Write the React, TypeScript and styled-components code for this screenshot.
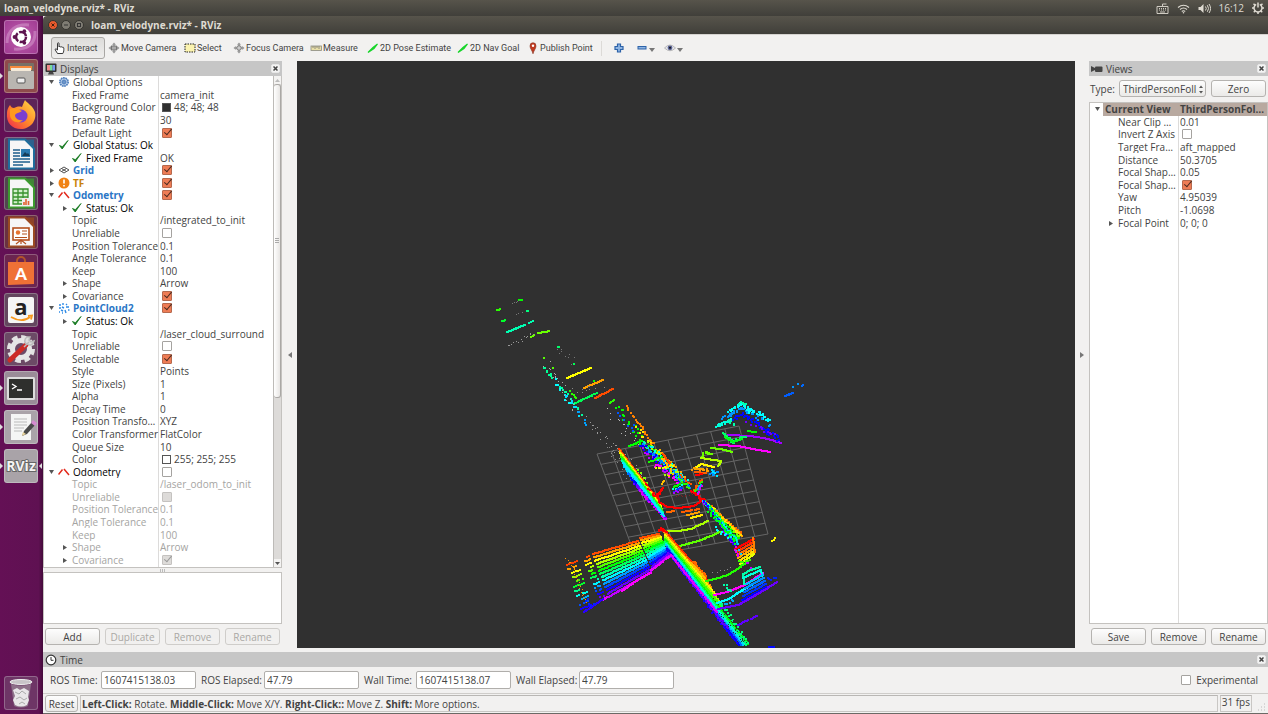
import React from 'react';
import styled, { createGlobalStyle, css } from 'styled-components';

const GlobalStyle = createGlobalStyle`
  *, *::before, *::after { box-sizing: border-box; }
  html, body, #root { height: 100%; }
  body { margin: 0; background: #f2f1f0; color: #434343; font: 10px/12px "Open Sans", "Noto Sans", sans-serif; overflow: hidden; }
  button, input, select { font: inherit; color: inherit; margin: 0; }
`;

/* ---------- desktop shell ---------- */

const Desktop = styled.div`
  display: flex;
  flex-direction: column;
  height: 100%;
`;

const barFill = css`
  background: linear-gradient(#57544b, #403f3a);
  color: #dfdbd2;
`;

const TopPanel = styled.header`
  ${barFill}
  display: flex;
  align-items: center;
  justify-content: space-between;
  flex: 0 0 16px;
  padding: 0 4px;
`;

const PanelTitle = styled.span`
  font-weight: 700;
`;

const Indicators = styled.div`
  display: flex;
  align-items: center;
  gap: 8px;
`;

const Body = styled.div`
  display: flex;
  flex: 1;
  min-height: 0;
`;

const Launcher = styled.nav`
  display: flex;
  flex-direction: column;
  flex: 0 0 43px;
  gap: 5px;
  padding: 4px 0 4px 4px;
  background: linear-gradient(90deg, #641055, #5f1152 90%, #430a3a);
`;

const LaunchButton = styled.button<{ $tone: string; $last?: boolean }>`
  position: relative;
  width: 34px;
  height: 34px;
  padding: 0;
  border: 1px solid rgba(255, 255, 255, 0.25);
  border-radius: 3px;
  background: ${(p) => p.$tone};
  ${(p) => p.$last && 'margin-top: auto;'}
  svg { display: block; width: 32px; height: 32px; overflow: visible; }
`;

const Pip = styled.i<{ $right?: boolean }>`
  position: absolute;
  top: 13px;
  ${(p) => (p.$right ? 'right: -5px; border-right: 3px solid #ddd;' : 'left: -5px; border-left: 3px solid #ddd;')}
  border-top: 3px solid transparent;
  border-bottom: 3px solid transparent;
`;

const Window = styled.main`
  display: flex;
  flex-direction: column;
  flex: 1;
  min-width: 0;
  border-bottom: 1px solid #6b6965;
`;

const TitleBar = styled.div`
  ${barFill}
  display: flex;
  align-items: center;
  gap: 3px;
  flex: 0 0 18px;
  padding: 0 5px;
  border-radius: 4px 0 0 0;
  font-weight: 700;
  h1 { margin: 0 0 0 4px; font: inherit; }
`;

const WindowDot = styled.button<{ $close?: boolean }>`
  display: flex;
  width: 10px;
  height: 10px;
  padding: 0;
  border: 1px solid #35342f;
  border-radius: 50%;
  background: ${(p) => (p.$close ? '#ea5a2d' : '#7f7c73')};
  svg { width: 8px; height: 8px; }
`;

/* ---------- toolbar ---------- */

const Toolbar = styled.div`
  display: flex;
  align-items: center;
  flex: 0 0 27px;
  padding-left: 8px;
  font-family: Roboto, "Open Sans", sans-serif;
  font-size: 9px;
  border-top: 1px solid #d5d3d0;
`;

const ToolButton = styled.button<{ $w: number; $active?: boolean }>`
  display: flex;
  align-items: center;
  gap: 1px;
  width: ${(p) => p.$w}px;
  height: 22px;
  padding: 0 0 0 2px;
  white-space: nowrap;
  border: 1px solid ${(p) => (p.$active ? '#a9a7a4' : 'transparent')};
  border-radius: 3px;
  background: ${(p) => (p.$active ? 'linear-gradient(#dddcda, #efeeed)' : 'transparent')};
  svg { flex: none; width: 12px; height: 12px; }
`;

const Separator = styled.i`
  width: 1px;
  height: 15px;
  margin-right: 8px;
  background: #dcdad7;
`;

/* ---------- docks ---------- */

const Workspace = styled.div`
  display: grid;
  grid-template-columns: 239px 15px minmax(0, 1fr) 14px 179px;
  flex: 1;
  min-height: 0;
  padding-bottom: 4px;
`;

const Dock = styled.section`
  display: flex;
  flex-direction: column;
  min-width: 0;
  min-height: 0;
`;

const DockHeader = styled.div`
  display: flex;
  align-items: center;
  gap: 3px;
  flex: none;
  height: 15px;
  padding: 0 2px 0 2px;
  background: #c6c6c6;
  svg { width: 12px; height: 12px; }
  h2 { flex: 1; margin: 0; font: inherit; }
`;

const CloseButton = styled.button`
  display: flex;
  width: 9px;
  height: 9px;
  padding: 1px;
  border: 1px solid #e8e8e8;
  border-radius: 2px;
  background: #f4f4f4;
  && svg { width: 5px; height: 5px; }
`;

const Gutter = styled.div`
  display: flex;
  align-items: center;
  justify-content: center;
`;

const Frame = styled.div<{ $grow?: boolean; $flush?: boolean }>`
  display: flex;
  ${(p) => (p.$grow ? 'flex: 1; min-height: 0;' : 'height: 52px;')}
  border: 1px solid #c4c2bf;
  ${(p) => p.$flush && 'border-top: 0;'}
  background: #fff;
  overflow: hidden;
`;

const TreeArea = styled.div<{ $split: number }>`
  flex: 1;
  min-width: 0;
  background: linear-gradient(90deg, transparent ${(p) => p.$split - 1}px, #dcdbda 0, #dcdbda ${(p) => p.$split}px, transparent 0);
`;

const Tree = styled.table<{ $split: number; $h: number }>`
  width: 100%;
  height: ${(p) => p.$h}px;
  table-layout: fixed;
  border-collapse: collapse;
  white-space: nowrap;
  td { padding: 0; overflow: hidden; vertical-align: middle; line-height: 12px; }
  td:first-child { width: ${(p) => p.$split}px; }
`;

const TreeRow = styled.tr<{ $dim?: boolean; $selected?: boolean }>`
  ${(p) => p.$dim && 'color: #a5a4a2;'}
  ${(p) => p.$selected && 'font-weight: 700; background: linear-gradient(90deg, #fff 13px, #b8a9a0 0);'}
`;

const NameCell = styled.div<{ $level: number; $tone?: string; $bold?: boolean }>`
  display: flex;
  align-items: center;
  height: 12px;
  padding-left: ${(p) => p.$level * 13 + 2}px;
  color: ${(p) => p.$tone ?? 'inherit'};
  font-weight: ${(p) => (p.$bold ? 700 : 'inherit')};
`;

const Twist = styled.svg`
  flex: none;
  width: 10px;
  height: 10px;
`;

const RowIcon = styled.span`
  display: flex;
  flex: none;
  width: 17px;
  padding-left: 2px;
  svg { width: 12px; height: 12px; }
`;

const ValueCell = styled.div`
  display: flex;
  align-items: center;
  gap: 3px;
  height: 12px;
  padding-left: 1px;
`;

const Swatch = styled.i<{ $fill: string }>`
  width: 9px;
  height: 9px;
  margin-left: 2px;
  border: 1px solid #555;
  background: ${(p) => p.$fill};
`;

const Check = styled.input.attrs({ type: 'checkbox' })`
  appearance: none;
  position: relative;
  flex: none;
  width: 10px;
  height: 10px;
  margin-left: 2px;
  border: 1px solid #a5a3a0;
  border-radius: 1px;
  background: #fff;
  &:checked { background: #ee7c55; border-color: #b5694e; }
  &:disabled { background: #dddbd9; border-color: #c4c2c0; }
  &:checked::after {
    content: '';
    position: absolute;
    left: 3px;
    top: -2px;
    width: 4px;
    height: 8px;
    border: solid #4a2a20;
    border-width: 0 1px 1px 0;
    transform: rotate(40deg);
  }
  &:checked:disabled::after { border-color: #999; }
`;

const ScrollTrack = styled.div`
  display: flex;
  flex-direction: column;
  flex: 0 0 8px;
  align-items: center;
  border-left: 1px solid #bdbbb8;
  background: #dddbd9;
`;

const ScrollCap = styled.div`
  display: flex;
  align-items: center;
  justify-content: center;
  width: 100%;
  height: 8px;
  background: #f4f3f2;
  svg { width: 5px; height: 5px; }
`;

const ScrollFoot = styled(ScrollCap)`
  margin-top: auto;
`;

const ScrollThumb = styled.div`
  display: flex;
  align-items: center;
  justify-content: center;
  width: 100%;
  flex: 0 1 64%;
  border: 1px solid #aaa8a5;
  border-left: 0;
  border-radius: 3px;
  background: linear-gradient(90deg, #fff, #e8e6e4);
  svg { width: 4px; height: 6px; }
`;

const SplitHandle = styled.div`
  display: flex;
  align-items: center;
  justify-content: center;
  height: 4px;
  svg { width: 6px; height: 3px; }
`;

const ButtonRow = styled.div`
  display: grid;
  grid-auto-flow: column;
  grid-auto-columns: 1fr;
  gap: 5px;
  padding: 4px 2px 3px;
`;

const PushButton = styled.button`
  height: 17px;
  padding: 0 4px;
  border: 1px solid #b5b3b0;
  border-radius: 3px;
  background: linear-gradient(#fdfdfd, #ebeae8);
  line-height: 12px;
  &:disabled { color: #aaa8a5; border-color: #cfcdca; background: #f1f0ef; }
`;

const TypeRow = styled.div`
  display: grid;
  grid-template-columns: 24px 87px 1fr;
  gap: 5px;
  align-items: center;
  padding: 4px 2px 5px 1px;
`;

const SelectBox = styled.div`
  position: relative;
  svg { position: absolute; right: 2px; top: 5px; width: 6px; height: 9px; pointer-events: none; }
`;

const TypeSelect = styled.select`
  appearance: none;
  display: block;
  width: 100%;
  height: 17px;
  padding: 0 8px 0 3px;
  border: 1px solid #b5b3b0;
  border-radius: 3px;
  background: linear-gradient(#fdfdfd, #ebeae8);
`;

const Viewport = styled.div`
  min-width: 0;
  min-height: 0;
  background: #303030;
  svg { display: block; width: 100%; height: 100%; }
`;

/* ---------- time dock and status bar ---------- */

const TimeFields = styled.div`
  display: flex;
  align-items: center;
  height: 26px;
  padding: 0 10px 0 7px;
`;

const FieldLabel = styled.label<{ $w: number }>`
  width: ${(p) => p.$w}px;
  white-space: nowrap;
`;

const Field = styled.input`
  width: 95px;
  height: 18px;
  margin-right: 5px;
  padding: 0 2px;
  border: 1px solid #b0aeab;
  border-radius: 2px;
  background: #fff;
`;

const Experimental = styled.label`
  display: flex;
  align-items: center;
  gap: 5px;
  margin-left: auto;
`;

const StatusBar = styled.footer`
  display: flex;
  align-items: stretch;
  gap: 2px;
  height: 20px;
  padding: 1px 2px;
  border-top: 1px solid #cfcdca;
`;

const ResetButton = styled(PushButton)`
  width: 33px;
  padding: 0;
`;

const StatusText = styled.div<{ $grow?: boolean }>`
  ${(p) => (p.$grow ? 'flex: 1; line-height: 16px;' : 'flex: 0 0 31px; line-height: 12px;')}
  padding: 0 1px;
  border: 1px solid #c9c7c4;
  border-top-color: #b9b7b4;
  white-space: nowrap;
`;

const Grip = styled.svg`
  align-self: flex-end;
  width: 12px;
  height: 12px;
`;

/* ---------- small glyphs ---------- */

const Triangle = ({ open }: { open: boolean }) => (
  <Twist viewBox="0 0 10 10" aria-hidden="true">
    <path d={open ? 'M3 3h5L5.500 7z' : 'M4 3v5l4-2.500z'} fill="#555" />
  </Twist>
);

const CloseGlyph = () => (
  <svg viewBox="0 0 5 5"><path d="M.5.5l4 4M4.500.5l-4 4" stroke="#444" strokeWidth="1.500" /></svg>
);

const SideArrow = ({ right }: { right?: boolean }) => (
  <svg width="5" height="6" viewBox="0 0 5 6"><path d={right ? 'M0 0v6l4-3z' : 'M5 0v6l-4-3z'} fill="#777" /></svg>
);

const rowIcons: Record<string, React.ReactNode> = {
  gear: (
    <svg viewBox="0 0 12 12"><circle cx="6" cy="6" r="4.200" fill="#b7cce8" stroke="#4f7fbd" strokeWidth="1.600" strokeDasharray="1.600 .7" /><circle cx="6" cy="6" r="1.600" fill="#fff" stroke="#4f7fbd" strokeWidth=".9" /><path d="M6 2v8M2 6h8M3.200 3.200l5.600 5.600M8.800 3.200L3.200 8.800" stroke="#4f7fbd" strokeWidth=".6" /></svg>
  ),
  ok: <svg viewBox="0 0 12 12"><path d="M1.500 6.500L4.200 10 10 1.500 4.300 7.700z" fill="#187a22" stroke="#187a22" strokeWidth=".9" /></svg>,
  grid: <svg viewBox="0 0 12 12"><path d="M1 6l5-3 5 3-5 3zM3.500 4.500l5 3M8.500 4.500l-5 3" fill="none" stroke="#555" strokeWidth="1" /></svg>,
  warn: <svg viewBox="0 0 12 12"><circle cx="6" cy="6" r="5.500" fill="#f08214" /><path d="M6 2.500v4M6 8v1.600" stroke="#fff" strokeWidth="1.600" /></svg>,
  odom: <svg viewBox="0 0 12 12"><path d="M.5 8.500L4.500 3.500M6 3l5 6" stroke="#e32a1c" strokeWidth="1.500" /></svg>,
  cloud: <svg viewBox="0 0 12 12"><path d="M1 3h2M5 1v2M8 2l1 1M1 6h2M4 5l2 1M8 5h3M3 8l2 1M7 8l1 3M10 8h1.500M1 10h1M4 11h1" stroke="#2f8be6" strokeWidth="1.400" /></svg>,
};

const BLUE = '#2a76c6';

type Item = {
  name: string;
  level?: number;
  open?: boolean;
  icon?: string;
  tone?: string;
  bold?: boolean;
  value?: string;
  swatch?: string;
  checked?: boolean;
  dim?: boolean;
  selected?: boolean;
};

const displayItems: Item[] = [
  { name: 'Global Options', open: true, icon: 'gear' },
  { name: 'Fixed Frame', level: 1, value: 'camera_init' },
  { name: 'Background Color', level: 1, value: '48; 48; 48', swatch: '#303030' },
  { name: 'Frame Rate', level: 1, value: '30' },
  { name: 'Default Light', level: 1, checked: true },
  { name: 'Global Status: Ok', open: true, icon: 'ok', tone: '#000' },
  { name: 'Fixed Frame', level: 1, icon: 'ok', tone: '#000', value: 'OK' },
  { name: 'Grid', open: false, icon: 'grid', tone: BLUE, bold: true, checked: true },
  { name: 'TF', open: false, icon: 'warn', tone: '#c98208', bold: true, checked: true },
  { name: 'Odometry', open: true, icon: 'odom', tone: BLUE, bold: true, checked: true },
  { name: 'Status: Ok', level: 1, open: false, icon: 'ok', tone: '#000' },
  { name: 'Topic', level: 1, value: '/integrated_to_init' },
  { name: 'Unreliable', level: 1, checked: false },
  { name: 'Position Tolerance', level: 1, value: '0.1' },
  { name: 'Angle Tolerance', level: 1, value: '0.1' },
  { name: 'Keep', level: 1, value: '100' },
  { name: 'Shape', level: 1, open: false, value: 'Arrow' },
  { name: 'Covariance', level: 1, open: false, checked: true },
  { name: 'PointCloud2', open: true, icon: 'cloud', tone: BLUE, bold: true, checked: true },
  { name: 'Status: Ok', level: 1, open: false, icon: 'ok', tone: '#000' },
  { name: 'Topic', level: 1, value: '/laser_cloud_surround' },
  { name: 'Unreliable', level: 1, checked: false },
  { name: 'Selectable', level: 1, checked: true },
  { name: 'Style', level: 1, value: 'Points' },
  { name: 'Size (Pixels)', level: 1, value: '1' },
  { name: 'Alpha', level: 1, value: '1' },
  { name: 'Decay Time', level: 1, value: '0' },
  { name: 'Position Transfo…', level: 1, value: 'XYZ' },
  { name: 'Color Transformer', level: 1, value: 'FlatColor' },
  { name: 'Queue Size', level: 1, value: '10' },
  { name: 'Color', level: 1, value: '255; 255; 255', swatch: '#fff' },
  { name: 'Odometry', open: true, icon: 'odom', tone: '#000', checked: false },
  { name: 'Topic', level: 1, value: '/laser_odom_to_init', dim: true },
  { name: 'Unreliable', level: 1, checked: false, dim: true },
  { name: 'Position Tolerance', level: 1, value: '0.1', dim: true },
  { name: 'Angle Tolerance', level: 1, value: '0.1', dim: true },
  { name: 'Keep', level: 1, value: '100', dim: true },
  { name: 'Shape', level: 1, open: false, value: 'Arrow', dim: true },
  { name: 'Covariance', level: 1, open: false, checked: true, dim: true },
];

const viewItems: Item[] = [
  { name: 'Current View', open: true, value: 'ThirdPersonFol…', selected: true },
  { name: 'Near Clip …', level: 1, value: '0.01' },
  { name: 'Invert Z Axis', level: 1, checked: false },
  { name: 'Target Fra…', level: 1, value: 'aft_mapped' },
  { name: 'Distance', level: 1, value: '50.3705' },
  { name: 'Focal Shap…', level: 1, value: '0.05' },
  { name: 'Focal Shap…', level: 1, checked: true },
  { name: 'Yaw', level: 1, value: '4.95039' },
  { name: 'Pitch', level: 1, value: '-1.0698' },
  { name: 'Focal Point', level: 1, open: false, value: '0; 0; 0' },
];

const Spacer = styled.i<{ $w: number }>`
  flex: 0 0 ${(p) => p.$w}px;
`;

const PropertyTree = ({ items, split, height, label }: { items: Item[]; split: number; height: number; label: string }) => (
  <TreeArea $split={split}>
    <Tree $split={split} $h={height} aria-label={label}>
      <tbody>
        {items.map((item, i) => (
          <TreeRow key={i} $dim={item.dim} $selected={item.selected}>
            <td>
              <NameCell $level={item.level ?? 0} $tone={item.tone} $bold={item.bold}>
                {item.open === undefined ? <Spacer $w={10} /> : <Triangle open={item.open} />}
                {item.icon ? <RowIcon>{rowIcons[item.icon]}</RowIcon> : <Spacer $w={3} />}
                {item.name}
              </NameCell>
            </td>
            <td>
              <ValueCell>
                {item.swatch && <Swatch $fill={item.swatch} />}
                {item.checked !== undefined && (
                  <Check defaultChecked={item.checked} disabled={item.dim} aria-label={item.name} />
                )}
                {item.value}
              </ValueCell>
            </td>
          </TreeRow>
        ))}
      </tbody>
    </Tree>
  </TreeArea>
);

/* ---------- toolbar icons ---------- */

const Arrow2D = () => (
  <svg viewBox="0 0 12 12"><path d="M1 10.500L6 5.500 10.500 2 7 6.500z" fill="#19d52c" stroke="#19d52c" strokeWidth="1.200" /></svg>
);
const CrossIcon = ({ core }: { core?: boolean }) => (
  <svg viewBox="0 0 12 12">
    <path d="M6 .5l2 2.300H4zM6 11.500l2-2.300H4zM.5 6l2.300-2v4zM11.500 6L9.200 4v4z" fill="#999" />
    <path d="M6 2v8M2 6h8" stroke="#888" strokeWidth="1" />
    {core ? <circle cx="6" cy="6" r="2.300" fill="#ccc" stroke="#777" /> : <rect x="3.500" y="4" width="5" height="4" fill="#aaa" stroke="#666" strokeWidth=".8" />}
  </svg>
);

const tools: { label: string; w: number; icon: React.ReactNode }[] = [
  { label: 'Interact', w: 54, icon: <svg viewBox="0 0 12 12"><path d="M3.500 11.500L1 7.500l1-.8 1.500 1.300V1.500c0-1 1.500-1 1.500 0V5c.3-.8 1.500-.6 1.600.1.4-.6 1.500-.4 1.600.3.5-.5 1.600-.2 1.600.7 0 2 .2 3.500-1 5.400z" fill="#fff" stroke="#222" strokeWidth=".9" /></svg> },
  { label: 'Move Camera', w: 76, icon: <CrossIcon /> },
  { label: 'Select', w: 49, icon: <svg viewBox="0 0 12 12"><rect x="1" y="2" width="10" height="8" fill="#fbf3b0" stroke="#222" strokeWidth="1" strokeDasharray="1.500 1" /></svg> },
  { label: 'Focus Camera', w: 77, icon: <CrossIcon core /> },
  { label: 'Measure', w: 57, icon: <svg viewBox="0 0 12 12"><rect x="1" y="4" width="10.500" height="4.500" fill="#e9dfa8" stroke="#8a8a80" strokeWidth=".8" /><path d="M3 4v2M5 4v3M7 4v2M9 4v3" stroke="#777" strokeWidth=".8" /></svg> },
  { label: '2D Pose Estimate', w: 90, icon: <Arrow2D /> },
  { label: '2D Nav Goal', w: 70, icon: <Arrow2D /> },
  { label: 'Publish Point', w: 77, icon: <svg viewBox="0 0 12 12"><path d="M6 11.800C5.500 9 3 6.500 3 4a3 3.300 0 016 0c0 2.500-2.500 5-3 7.800z" fill="#c13a20" stroke="#84301f" strokeWidth=".6" /><circle cx="6" cy="3.800" r="1.200" fill="#fff" /></svg> },
];

const Caret = () => <svg viewBox="0 0 12 12"><path d="M0 6h6L3 10z" fill="#777" /></svg>;

/* ---------- launcher icons ---------- */

const DocIcon = ({ tone, children }: { tone: string; children: React.ReactNode }) => (
  <svg viewBox="0 0 32 32">
    <path d="M4 1.500h16l9 9V30.500H4z" fill="#f6f6f6" stroke={tone} strokeWidth="2" />
    <path d="M20 1.500h9v9z" fill={tone} opacity=".75" />
    {children}
  </svg>
);

const launchers: { name: string; tone: string; left?: boolean; right?: boolean; icon: React.ReactNode }[] = [
  { name: 'Search', tone: 'radial-gradient(#c060b0, #a03b92)', icon: <svg viewBox="0 0 32 32"><path d="M2 22C2 8 12 3 24 4M30 10c1 14-9 19-21 18" stroke="#d8a0d0" strokeWidth="3" fill="none" opacity=".5" /><circle cx="16" cy="16" r="10" fill="#fff" /><circle cx="16" cy="16" r="5" fill="none" stroke="#5e1450" strokeWidth="2.500" strokeDasharray="9 1.500" /><circle cx="9.500" cy="16" r="1.900" fill="#5e1450" /><circle cx="19.300" cy="10.200" r="1.900" fill="#5e1450" /><circle cx="19.300" cy="21.800" r="1.900" fill="#5e1450" /></svg> },
  { name: 'Files', tone: '#8f4a4c', left: true, icon: <svg viewBox="0 0 32 32"><rect x="3" y="3" width="26" height="13" rx="1" fill="#777067" /><rect x="5" y="6" width="22" height="4" fill="#f58a3c" /><path d="M6 8h20v4H6z" fill="#f4ead8" /><rect x="3" y="11" width="26" height="18" rx="1" fill="#b9b6b1" /><rect x="12" y="18" width="8" height="5" rx="1" fill="#eee" stroke="#555" /></svg> },
  { name: 'Firefox', tone: '#5d2458', icon: <svg viewBox="0 0 32 32"><defs><linearGradient id="fox" x1="1" y1="0" x2="0" y2="1"><stop offset="0" stopColor="#ffe14a" /><stop offset=".5" stopColor="#ff8a2a" /><stop offset="1" stopColor="#f0244f" /></linearGradient></defs><path d="M20 1c2 3 8 6 10 12 2 9-5 17-14 17S1 24 2 14c0-3 1-5 3-8 1 2 2 3 4 3 2-1 5-2 8-1 1-3 2-5 3-7z" fill="url(#fox)" /><circle cx="16" cy="17" r="6.500" fill="#7a3fd0" /><path d="M5 10c4-2 8 0 12 2-3 2-6 2-7 4 0 3 3 6 8 5-5 5-13 1-13-5z" fill="#ff9a1f" /></svg> },
  { name: 'Writer', tone: '#5c3e62', icon: <DocIcon tone="#1f6d9c"><path d="M8 12h7M8 15h7M8 18h7M8 21h17M8 24h17M8 27h10" stroke="#1e5f8d" strokeWidth="1.500" /><rect x="16" y="11" width="9" height="8" fill="#2b7bb0" /><path d="M17 18l3-4 2 2 1-1 2 3z" fill="#173d58" /></DocIcon> },
  { name: 'Calc', tone: '#52454f', icon: <DocIcon tone="#3c9a2f"><path d="M8 12h15v15H8zM8 16h15M8 20h15M8 23.500h15M13 12v15M18 12v15" fill="#d3f0cc" stroke="#37912c" strokeWidth="1.300" /><rect x="17" y="21" width="8" height="8" fill="#eee" /><path d="M19 28v-3M21 28v-6M23.500 28v-4" stroke="#e4622e" strokeWidth="1.600" /></DocIcon> },
  { name: 'Impress', tone: '#6a3040', icon: <DocIcon tone="#9a4a22"><rect x="8" y="12" width="16" height="12" fill="#fff" stroke="#b4501f" strokeWidth="1.600" /><circle cx="13" cy="16.500" r="2.200" fill="#e6722e" /><path d="M17 15h5M17 18h5M10 21.500h12M16 24v4M11 28l5-4 5 4" stroke="#b4501f" strokeWidth="1.200" fill="none" /></DocIcon> },
  { name: 'Software', tone: '#6b2550', icon: <svg viewBox="0 0 32 32"><path d="M12 9V6a4 4 0 018 0v3" stroke="#b3532b" strokeWidth="2" fill="none" /><path d="M3 7h26v22l-26 1z" fill="#ef7136" /><text x="16" y="25" textAnchor="middle" fontFamily="Lato" fontWeight="900" fontSize="17" fill="#fff">A</text></svg> },
  { name: 'Amazon', tone: '#64465f', icon: <svg viewBox="0 0 32 32"><rect x="3" y="3" width="26" height="26" rx="2" fill="#f5f5f5" /><text x="16" y="21" textAnchor="middle" fontFamily="Open Sans" fontWeight="700" fontSize="22" fill="#222">a</text><path d="M6 23c7 4 14 4 19 0M23 22l4-.5-1 4" stroke="#f7981d" strokeWidth="1.800" fill="none" /></svg> },
  { name: 'Settings', tone: '#6c4a66', icon: <svg viewBox="0 0 32 32"><circle cx="16" cy="16" r="11.500" fill="none" stroke="#e2e2e2" strokeWidth="5" strokeDasharray="5.500 3.500" /><circle cx="16" cy="16" r="8.500" fill="none" stroke="#e6e6e6" strokeWidth="5" /><path d="M5 27L21 12" stroke="#cc2b26" strokeWidth="5" strokeLinecap="round" /><path d="M19 14l5-5M22 4c-3 2-3 6 0 7 3 2 6 1 7-3l-3 1-2-2 1-3z" stroke="#bbb" strokeWidth="1.500" fill="#ddd" /></svg> },
  { name: 'Terminal', tone: '#9a8c98', left: true, icon: <svg viewBox="0 0 32 32"><rect x="2" y="5" width="28" height="23" rx="1.500" fill="#ddd" /><rect x="4" y="7" width="24" height="19" fill="#2e2f2d" /><path d="M7 12l4 2.500L7 17M12 18h5" stroke="#fff" strokeWidth="1.400" fill="none" /></svg> },
  { name: 'Text Editor', tone: '#aaa3a9', left: true, icon: <svg viewBox="0 0 32 32"><path d="M6 3h20v26H6z" fill="#f5f5f5" /><path d="M9 8h13M9 11h13M9 14h13M9 17h10M9 20h8" stroke="#bbb" /><path d="M17 25l2-5 8-9 3 3-8 9z" fill="#4a4a4a" /><path d="M26 12l2-3 4 3-2 3z" fill="#d58bd0" /><path d="M17 25l1-4 3 2z" fill="#e8d39a" /></svg> },
  { name: 'RViz', tone: '#a9a3a8', left: true, right: true, icon: <svg viewBox="0 0 32 32"><text x="16" y="21" textAnchor="middle" fontFamily="Open Sans" fontWeight="700" fontSize="14" fill="#f4f4f4" stroke="#666" strokeWidth="2" paintOrder="stroke">RViz</text></svg> },
];

/* ---------- laser point cloud ---------- */

type Pt = [number, number];

let seed = 20201208;
const rand = () => {
  seed = (seed * 1664525 + 1013904223) % 4294967296;
  return seed / 4294967296;
};

type Trace = { d: string; color: string; size: number };
const cloud: Trace[] = [];

// Samples a polyline into square points; `jitter` scatters and `keep` thins them.
const trace = (pts: Pt[], color: string, o: { size?: number; step?: number; jitter?: number; keep?: number } = {}) => {
  const { size = 2, step = 2, jitter = 0, keep = 1 } = o;
  const shift = size === 1 ? 0.5 : 0;
  let d = '';
  for (let i = 0; i < pts.length - 1; i++) {
    const [x1, y1] = pts[i];
    const [x2, y2] = pts[i + 1];
    const n = Math.max(1, Math.round(Math.hypot(x2 - x1, y2 - y1) / step));
    for (let k = 0; k <= n; k++) {
      if (rand() > keep) continue;
      const x = Math.round(x1 + ((x2 - x1) * k) / n + (rand() - 0.5) * jitter * 2);
      const y = Math.round(y1 + ((y2 - y1) * k) / n + (rand() - 0.5) * jitter * 2);
      d += `M${x} ${y + shift}h${size}`;
    }
  }
  cloud.push({ d, color, size });
};

const hue = (h: number) => `hsl(${h} 100% 50%)`;
const lerp = (a: number, b: number, t: number) => a + (b - a) * t;

// A rainbow strip between two edge lines, running through the hues from the first to the second.
const band = (a: [Pt, Pt], b: [Pt, Pt], n: number, h0: number, h1: number, o = {}) => {
  for (let i = 0; i < n; i++) {
    const t = i / (n - 1);
    trace(
      [
        [lerp(a[0][0], b[0][0], t), lerp(a[0][1], b[0][1], t)],
        [lerp(a[1][0], b[1][0], t), lerp(a[1][1], b[1][1], t)],
      ],
      hue(lerp(h0, h1, t)),
      o,
    );
  }
};

// far corridor
trace([[518, 300], [521, 300]], hue(120));
trace([[496, 310], [499, 309]], hue(110));
trace([[526, 311], [527, 311]], hue(150));
trace([[501, 321], [504, 320]], hue(130));
trace([[506, 332], [524, 325]], hue(162), { step: 1 });
trace([[528, 323], [532, 321]], hue(162));
trace([[530, 337], [533, 335]], hue(95));
trace([[537, 333], [549, 331]], hue(95), { step: 1, keep: 0.9 });
trace([[509, 345], [533, 333]], '#999', { size: 1, jitter: 2 });
trace([[512, 303], [519, 300]], '#777', { size: 1 });
trace([[514, 314], [526, 311]], '#777', { size: 1, keep: 0.6 });
trace([[558, 347], [574, 364]], '#777', { size: 1, jitter: 4, keep: 0.7 });
trace([[557, 347], [558, 347]], hue(145));
trace([[573, 364], [573, 364]], hue(140));
trace([[543, 358], [543, 358]], hue(100));
trace([[552, 368], [552, 368]], hue(100));
trace([[566, 378], [590, 368]], hue(60), { step: 1 });
trace([[583, 388], [602, 380]], hue(38), { step: 1 });
trace([[574, 403], [596, 393]], hue(140), { step: 1, keep: 0.8 });
trace([[594, 398], [612, 389]], hue(18), { step: 1 });
trace([[544, 366], [553, 380]], hue(155), { jitter: 2, keep: 0.7 });
trace([[553, 380], [570, 403]], hue(180), { jitter: 2, keep: 0.6 });
trace([[560, 387], [582, 415]], hue(158), { jitter: 1, keep: 0.7 });
trace([[565, 394], [580, 416]], hue(188), { jitter: 2, keep: 0.8 });
trace([[576, 412], [585, 425]], hue(202), { jitter: 2, keep: 0.6 });
trace([[546, 362], [575, 408]], '#aaa', { size: 1, jitter: 4, keep: 0.6 });
trace([[569, 391], [575, 398]], hue(110), { keep: 0.6 });
trace([[590, 376], [596, 388]], hue(120), { keep: 0.3 });
trace([[574, 390], [610, 386]], '#888', { size: 1, jitter: 3, keep: 0.5 });
trace([[588, 420], [616, 450], [646, 482]], '#999', { size: 1, jitter: 4, keep: 0.9 });
trace([[606, 440], [632, 480]], '#888', { size: 1, jitter: 5, keep: 0.6 });
trace([[610, 410], [640, 450]], '#bbb', { size: 1, jitter: 7, keep: 0.8 });
trace([[609, 403], [613, 400]], hue(110));

// ground grid
const corner = { tl: [597, 454] as Pt, tr: [739, 426] as Pt, br: [768, 534] as Pt, bl: [636, 558] as Pt };
const gridPath = Array.from({ length: 11 }, (_, i) => {
  const t = i / 10;
  const p = (a: Pt, b: Pt) => `${lerp(a[0], b[0], t)} ${lerp(a[1], b[1], t)}`;
  return `M${p(corner.tl, corner.bl)}L${p(corner.tr, corner.br)}M${p(corner.tl, corner.tr)}L${p(corner.bl, corner.br)}`;
}).join('');

// diagonal wall, upper part
trace([[616, 406], [634, 430], [644, 448]], hue(120), { jitter: 3, keep: 0.7 });
trace([[619, 412], [636, 436]], hue(220), { jitter: 3, keep: 0.4 });
trace([[625, 406], [641, 428], [654, 447]], hue(30), { jitter: 1, keep: 0.7 });
trace([[634, 424], [656, 452]], hue(55), { jitter: 2, keep: 0.8 });
trace([[628, 446], [641, 441]], hue(120), { step: 1 });
band([[646, 440], [684, 478]], [[638, 446], [676, 482]], 7, 40, 285, { jitter: 2, keep: 0.75 });
trace([[650, 447], [686, 482]], hue(175), { jitter: 2 });
trace([[648, 450], [690, 487]], hue(210), { jitter: 1, keep: 0.8 });
trace([[642, 446], [664, 464]], hue(240), { jitter: 3, keep: 0.7 });
trace([[662, 454], [670, 465]], hue(18), { step: 1 });
trace([[661, 458], [672, 474]], hue(45), { jitter: 1 });
trace([[648, 462], [661, 457]], hue(115), { keep: 0.9 });
trace([[653, 465], [662, 467]], hue(300), { jitter: 2 });
trace([[656, 468], [672, 466]], hue(65), { jitter: 1 });
trace([[664, 475], [676, 472]], hue(80), { jitter: 1, keep: 0.8 });
trace([[666, 473], [676, 482]], hue(300), { jitter: 2, keep: 0.8 });
trace([[680, 476], [690, 485]], hue(20), { jitter: 1 });
trace([[678, 479], [688, 487]], hue(110), { jitter: 1 });
trace([[658, 484], [668, 477]], hue(45), { jitter: 2, keep: 0.6 });
trace([[636, 470], [646, 482]], hue(90), { jitter: 3, keep: 0.5 });
band([[672, 486], [681, 484]], [[673, 493], [681, 490]], 4, 120, 280, { jitter: 1 });
trace([[676, 496], [700, 493]], '#802020', { size: 1, jitter: 1 });

// left wall
band([[623, 467], [663, 516]], [[638, 490], [665, 519]], 5, 190, 290, { step: 1, jitter: 1, keep: 0.8 });
band([[618, 449], [659, 503]], [[622, 463], [663, 516]], 8, 12, 185, { step: 1 });
trace([[645, 485], [654, 496]], hue(0), { jitter: 2 });
trace([[652, 496], [658, 493]], hue(0), { jitter: 2 });
trace([[662, 488], [657, 495], [658, 502], [667, 507], [678, 508], [693, 506], [703, 499]], hue(0), { step: 1 });

// junction and lower wall
trace([[691, 491], [700, 499], [706, 503]], hue(0), { jitter: 1, step: 1 });
band([[700, 480], [693, 490]], [[701, 486], [697, 493]], 4, 20, 290, { jitter: 1 });
trace([[699, 497], [716, 520], [732, 543]], hue(280), { jitter: 1, keep: 0.5 });
band([[706, 503], [740, 533]], [[702, 500], [734, 546]], 8, 25, 250, { step: 2, jitter: 1 });
trace([[715, 511], [740, 535]], hue(38), { jitter: 1 });
trace([[720, 517], [741, 536]], hue(52), { jitter: 1, keep: 0.7 });
trace([[708, 510], [734, 542]], hue(125), { jitter: 2, step: 1 });
trace([[714, 527], [737, 546]], hue(180), { jitter: 2, keep: 0.7 });
trace([[666, 512], [673, 511]], hue(25));
trace([[681, 512], [698, 509]], hue(22), { step: 1, keep: 0.8 });
trace([[686, 515], [698, 512]], hue(38), { keep: 0.9 });
trace([[690, 518], [701, 515]], hue(55), { step: 1 });
trace([[667, 531], [677, 531], [690, 529], [707, 521]], hue(80), { step: 1 });
trace([[678, 546], [697, 541], [710, 536], [719, 532]], hue(98), { step: 1 });

// upper right structure
trace([[718, 445], [737, 446], [752, 449], [769, 452]], hue(300), { step: 1 });
trace([[727, 435], [750, 436], [767, 439], [780, 443]], hue(278), { step: 1, keep: 0.9 });
trace([[722, 433], [732, 442], [744, 436]], hue(145), { step: 1, jitter: 1 });
trace([[724, 437], [732, 442], [741, 439]], hue(125), { step: 1 });
trace([[747, 431], [755, 432]], hue(120));
trace([[710, 448], [720, 449], [731, 452]], hue(95), { step: 1 });
trace([[700, 456], [706, 452], [710, 455]], hue(95), { jitter: 1, step: 1 });
trace([[700, 458], [720, 461], [717, 466]], hue(78), { step: 1 });
trace([[695, 467], [700, 464], [713, 467]], hue(58), { step: 1 });
trace([[692, 469], [707, 470]], hue(38), { step: 1, jitter: 1 });
trace([[694, 472], [705, 473]], hue(22), { step: 1 });
trace([[695, 475], [701, 474]], hue(0), { step: 1 });
trace([[709, 475], [716, 471]], hue(205), { jitter: 2, step: 1 });
trace([[711, 470], [715, 475]], hue(185), { jitter: 1 });
trace([[715, 427], [724, 423], [732, 419]], hue(172), { step: 1, jitter: 1 });
trace([[718, 424], [728, 420]], hue(172), { jitter: 1 });
trace([[720, 418], [730, 415]], hue(205), { jitter: 1 });
trace([[728, 411], [740, 404], [752, 412]], hue(178), { jitter: 1, step: 1 });
trace([[730, 414], [741, 408], [748, 413]], hue(205), { jitter: 1, step: 1 });
trace([[738, 403], [745, 404]], hue(160), { jitter: 1 });
trace([[745, 410], [758, 414], [768, 420]], hue(180), { jitter: 2, step: 1 });
trace([[733, 418], [743, 415], [757, 423], [767, 432], [778, 439]], hue(238), { jitter: 2, step: 1 });
trace([[750, 415], [762, 420], [769, 425]], hue(205), { jitter: 2, keep: 0.8 });
trace([[741, 422], [760, 428], [775, 436]], hue(265), { jitter: 2, keep: 0.5 });
trace([[727, 419], [733, 424]], hue(160), { jitter: 2 });
trace([[784, 396], [792, 393]], hue(218), { step: 1 });
trace([[792, 387], [792, 387]], hue(205));
trace([[797, 384], [797, 384]], hue(205));
trace([[801, 386], [802, 385]], hue(215));
trace([[771, 541], [774, 538]], hue(58));

// left fan of ground rings
const RINGS = 14;
for (let i = 0; i < RINGS; i++) {
  const t = i / (RINGS - 1);
  const color = hue(lerp(18, 285, t));
  const lx = lerp(583, 599, t);
  const ly = lerp(558, 601, t);
  const mx = lerp(637, 650, t);
  const my = lerp(541, 572, t);
  trace([[lx, ly], [lx + 5, ly - 2]], color, { keep: 0.8 });
  trace([[lx + 9, ly - 4], [mx, my]], color, { step: 1, keep: 0.97 });
  trace([[mx + 2, my - 3], [lerp(658, 668, t), lerp(534, 556, t)]], color, { step: 1 });
}
trace([[621, 591], [638, 579], [650, 573]], hue(300), { step: 1 });
trace([[649, 571], [668, 557]], hue(296), { step: 1, keep: 0.8 });
trace([[602, 600], [606, 597]], hue(295), { step: 1 });
for (let i = 0; i < 11; i++) {
  const t = i / 10;
  const x = lerp(566, 580, t);
  const y = lerp(564, 608, t);
  trace([[x, y + 1], [x + 10, y - 3]], hue(lerp(15, 245, t)), { keep: 0.75 });
}
trace([[566, 559], [572, 566], [580, 588], [586, 602]], hue(35), { size: 1, keep: 0.8, jitter: 1 });
trace([[583, 612], [592, 606], [602, 599]], hue(250), { step: 1, keep: 0.9 });
trace([[586, 600], [594, 606]], hue(232), { jitter: 2 });

// main diagonal wall
band([[663, 530], [706, 580]], [[664, 539], [722, 608]], 5, 10, 105, { step: 1 });
band([[664, 540], [747, 644]], [[666, 549], [738, 645]], 6, 120, 240, { step: 1 });
trace([[666, 550], [736, 643]], hue(245), { step: 1, jitter: 1 });
trace([[667, 552], [726, 628]], hue(262), { step: 1, jitter: 1, keep: 0.9 });
trace([[669, 554], [716, 612]], hue(292), { step: 1, keep: 0.9 });
trace([[720, 604], [748, 645]], hue(150), { jitter: 2, step: 2 });
trace([[724, 614], [746, 644]], '#303030', { size: 1, jitter: 5, step: 1 });
trace([[692, 561], [705, 576]], hue(25), { jitter: 1, step: 1 });
trace([[690, 563], [704, 578]], hue(45), { step: 1 });
trace([[658, 532], [661, 528], [666, 533]], hue(0), { jitter: 1, step: 1 });

// lower right rings
trace([[705, 581], [714, 579], [727, 575], [738, 568], [747, 561]], hue(112), { step: 1 });
trace([[712, 573], [730, 567]], '#888', { size: 1, step: 4, jitter: 1 });
for (let i = 0; i < 6; i++) {
  trace([[734 + i, 549 + i * 3], [753, 539 + i * 3]], hue(i * 13), { step: 1, keep: 0.95 });
}
trace([[752, 538], [754, 552]], hue(30), { step: 2 });
trace([[734, 540], [738, 555]], hue(190), { jitter: 2, keep: 0.8 });
trace([[734, 548], [737, 556]], hue(290), { jitter: 1 });
trace([[739, 562], [748, 560]], hue(105), { jitter: 1 });
trace([[746, 562], [750, 572]], hue(285), { jitter: 2, keep: 0.6 });
trace([[713, 595], [726, 592], [744, 585], [762, 573]], hue(300), { step: 1, keep: 0.8 });
trace([[716, 603], [728, 599], [738, 592], [760, 579]], hue(180), { step: 1 });
trace([[743, 584], [742, 574], [750, 570], [759, 567]], hue(160), { step: 1 });
trace([[742, 578], [760, 570], [761, 576]], hue(172), { step: 1, keep: 0.9 });
for (let i = 0; i < 5; i++) {
  trace([[745 - i, 584 + i * 4], [762 + i, 575 + i * 3]], hue(195 + i * 11), { step: 1, keep: 0.9 });
}
trace([[765, 579], [773, 578]], hue(232), { jitter: 2 });
trace([[724, 604], [736, 599]], hue(200), { jitter: 1, keep: 0.7 });
trace([[724, 585], [730, 592]], hue(160), { jitter: 1 });
trace([[717, 609], [737, 605], [757, 594], [776, 582]], hue(265), { step: 1, keep: 0.95 });
trace([[737, 625], [745, 621], [756, 616]], hue(262), { step: 1, keep: 0.9 });
trace([[768, 647], [773, 647]], hue(238));

const CloudView = () => (
  <svg viewBox="297 61 778 587" preserveAspectRatio="xMidYMid slice" role="img" aria-label="Point cloud">
    <path d={gridPath} stroke="#666" strokeWidth="1" fill="none" />
    <g shapeRendering="crispEdges">
      {cloud.map((t, i) => (
        <path key={i} d={t.d} stroke={t.color} strokeWidth={t.size} fill="none" />
      ))}
    </g>
  </svg>
);

/* ---------- page ---------- */

const fields = [
  { id: 'ros-time', label: 'ROS Time:', w: 51, value: '1607415138.03' },
  { id: 'ros-elapsed', label: 'ROS Elapsed:', w: 63, value: '47.79' },
  { id: 'wall-time', label: 'Wall Time:', w: 52, value: '1607415138.07' },
  { id: 'wall-elapsed', label: 'Wall Elapsed:', w: 63, value: '47.79' },
];

export default function App() {
  return (
    <Desktop>
      <GlobalStyle />
      <TopPanel>
        <PanelTitle>loam_velodyne.rviz* - RViz</PanelTitle>
        <Indicators>
          <svg width="13" height="11" viewBox="0 0 13 11"><path d="M1 3.500h11v7H1zM6.500 3.500V1h4" fill="none" stroke="#cfcbc2" /><path d="M3 5.500h1M5 5.500h1M7 5.500h1M9 5.500h1M3 7h1M5 7h1M7 7h1M9 7h1M4 9h5" stroke="#cfcbc2" /></svg>
          <svg width="13" height="11" viewBox="0 0 13 11"><path d="M1 4.500q5.500-4.500 11 0M3 6.500q3.500-3 7 0M4.800 8.500q1.700-1.500 3.400 0" fill="none" stroke="#dfdbd2" strokeWidth="1.100" /><circle cx="6.500" cy="9.800" r=".8" fill="#dfdbd2" /></svg>
          <svg width="13" height="11" viewBox="0 0 13 11"><path d="M.5 4h2L5.500 1v9l-3-3h-2z" fill="#dfdbd2" /><path d="M7.500 3.500q1.500 2 0 4M9.300 2.200q2.500 3.300 0 6.600M11 1q3.200 4.500 0 9" fill="none" stroke="#dfdbd2" /></svg>
          <span>16:12</span>
          <svg width="12" height="12" viewBox="0 0 12 12"><path d="M4.200 2.400a4 4 0 103.600 0" fill="none" stroke="#dfdbd2" strokeWidth="1.500" /><path d="M6 .5v5M6 10v2M0 6h2M10 6h2M1.500 1.800l1.500 1.300M10.500 1.800L9 3.100M1.800 10.200l1.400-1.400M10.200 10.200L8.800 8.800" stroke="#dfdbd2" strokeWidth="1.500" /></svg>
        </Indicators>
      </TopPanel>
      <Body>
        <Launcher aria-label="Launcher">
          {launchers.map((l) => (
            <LaunchButton key={l.name} $tone={l.tone} aria-label={l.name}>
              {l.icon}
              {l.left && <Pip />}
              {l.right && <Pip $right />}
            </LaunchButton>
          ))}
          <LaunchButton $tone="#6e3566" $last aria-label="Trash">
            <svg viewBox="0 0 32 32"><ellipse cx="16" cy="5" rx="11" ry="2.500" fill="#c8c4c8" stroke="#eee" /><path d="M6 7l3 22q7 3 14 0l3-22q-10 3-20 0z" fill="#8d7089" /><path d="M8 13l4-2 3 2 4-2 5 3-1 6 1 3-2 5q-6 3-12 0l-2-5 2-4z" fill="#e8e6e8" /><path d="M10 15l4 2 3-3 4 3M11 22l4-2 4 3 3-2M14 27l3-2 3 2" stroke="#aaa" fill="none" /></svg>
          </LaunchButton>
        </Launcher>
        <Window>
          <TitleBar>
            <WindowDot $close aria-label="Close"><svg viewBox="0 0 8 8"><path d="M2.500 2.500l3 3M5.500 2.500l-3 3" stroke="#40200f" /></svg></WindowDot>
            <WindowDot aria-label="Minimize"><svg viewBox="0 0 8 8"><path d="M2 4h4" stroke="#333" /></svg></WindowDot>
            <WindowDot aria-label="Maximize"><svg viewBox="0 0 8 8"><rect x="2.500" y="2.500" width="3" height="3" fill="none" stroke="#333" /></svg></WindowDot>
            <h1>loam_velodyne.rviz* - RViz</h1>
          </TitleBar>
          <Toolbar>
            {tools.map((t, i) => (
              <ToolButton key={t.label} $w={t.w} $active={i === 0}>{t.icon}{t.label}</ToolButton>
            ))}
            <Separator />
            <ToolButton $w={23} aria-label="Add tool"><svg viewBox="0 0 12 12"><path d="M4.500 2h3v2.500H10v3H7.500V10h-3V7.500H2v-3h2.500z" fill="#8db4e2" stroke="#2c62a8" strokeWidth="1.200" /></svg></ToolButton>
            <ToolButton $w={28} aria-label="Remove tool"><svg viewBox="0 0 12 12"><rect x="2" y="4.500" width="8" height="2.500" fill="#8db4e2" stroke="#2c62a8" /></svg><Caret /></ToolButton>
            <ToolButton $w={28} aria-label="Tool visibility"><svg viewBox="0 0 12 12"><path d="M.5 6q5.500-6 11 0-5.500 5.500-11 0z" fill="#e4e4ea" stroke="#aaa" strokeWidth=".8" /><circle cx="6" cy="5.800" r="2.400" fill="#5a6496" /><circle cx="6" cy="5.800" r="1" fill="#111" /></svg><Caret /></ToolButton>
          </Toolbar>
          <Workspace>
            <Dock aria-label="Displays">
              <DockHeader>
                <svg viewBox="0 0 12 12"><rect x=".5" y=".5" width="11" height="8.500" rx="1" fill="#333" /><path d="M2 2h3v5.500H2z" fill="#e88" /><path d="M5 2h2.500v5.500H5z" fill="#7d9" /><path d="M7.500 2H10v5.500H7.500z" fill="#79e" /><path d="M4 9h4l1 2.500H3z" fill="#444" /></svg>
                <h2>Displays</h2>
                <CloseButton aria-label="Close Displays"><CloseGlyph /></CloseButton>
              </DockHeader>
              <Frame $grow $flush>
                <PropertyTree items={displayItems} split={115} height={490} label="Display properties" />
                <ScrollTrack>
                  <ScrollCap><svg viewBox="0 0 5 5"><path d="M0 4h5L2.500 1z" fill="#bbb" /></svg></ScrollCap>
                  <ScrollThumb><svg viewBox="0 0 4 6"><path d="M0 .5h4M0 2.500h4M0 4.500h4" stroke="#aaa" /></svg></ScrollThumb>
                  <ScrollFoot><svg viewBox="0 0 5 5"><path d="M0 1h5L2.500 4z" fill="#555" /></svg></ScrollFoot>
                </ScrollTrack>
              </Frame>
              <SplitHandle><svg viewBox="0 0 6 3"><path d="M.5 0v3M2.500 0v3M4.500 0v3" stroke="#bbb" /></svg></SplitHandle>
              <Frame />
              <ButtonRow>
                <PushButton>Add</PushButton>
                <PushButton disabled>Duplicate</PushButton>
                <PushButton disabled>Remove</PushButton>
                <PushButton disabled>Rename</PushButton>
              </ButtonRow>
            </Dock>
            <Gutter><SideArrow /></Gutter>
            <Viewport><CloudView /></Viewport>
            <Gutter><SideArrow right /></Gutter>
            <Dock aria-label="Views">
              <DockHeader>
                <svg viewBox="0 0 12 12"><rect x="4" y="3.500" width="7.500" height="5.500" rx="1" fill="#444" /><path d="M0 3l4 2v2L0 9z" fill="#444" /></svg>
                <h2>Views</h2>
                <CloseButton aria-label="Close Views"><CloseGlyph /></CloseButton>
              </DockHeader>
              <TypeRow>
                <label htmlFor="view-type">Type:</label>
                <SelectBox>
                  <TypeSelect id="view-type"><option>ThirdPersonFoll</option></TypeSelect>
                  <svg viewBox="0 0 6 9"><path d="M1 3l2-2.500L5 3zM1 6l2 2.500L5 6z" fill="#555" /></svg>
                </SelectBox>
                <PushButton>Zero</PushButton>
              </TypeRow>
              <Frame $grow>
                <PropertyTree items={viewItems} split={89} height={126} label="View properties" />
              </Frame>
              <ButtonRow>
                <PushButton>Save</PushButton>
                <PushButton>Remove</PushButton>
                <PushButton>Rename</PushButton>
              </ButtonRow>
            </Dock>
          </Workspace>
          <section aria-label="Time">
            <DockHeader>
              <svg viewBox="0 0 12 12"><circle cx="6" cy="6" r="4.800" fill="#fff" stroke="#333" strokeWidth="1.200" /><path d="M6 3v3.300h2.500" fill="none" stroke="#333" /></svg>
              <h2>Time</h2>
              <CloseButton aria-label="Close Time"><CloseGlyph /></CloseButton>
            </DockHeader>
            <TimeFields>
              {fields.map((f) => (
                <React.Fragment key={f.id}>
                  <FieldLabel htmlFor={f.id} $w={f.w}>{f.label}</FieldLabel>
                  <Field id={f.id} defaultValue={f.value} />
                </React.Fragment>
              ))}
              <Experimental><Check />Experimental</Experimental>
            </TimeFields>
          </section>
          <StatusBar>
            <ResetButton>Reset</ResetButton>
            <StatusText $grow>
              <b>Left-Click:</b> Rotate. <b>Middle-Click:</b> Move X/Y. <b>Right-Click::</b> Move Z. <b>Shift:</b> More options.
            </StatusText>
            <StatusText>31 fps</StatusText>
            <Grip viewBox="0 0 12 12"><path d="M10 4h1M7 7h1M10 7h1M4 10h1M7 10h1M10 10h1" stroke="#bbb" /></Grip>
          </StatusBar>
        </Window>
      </Body>
    </Desktop>
  );
}
